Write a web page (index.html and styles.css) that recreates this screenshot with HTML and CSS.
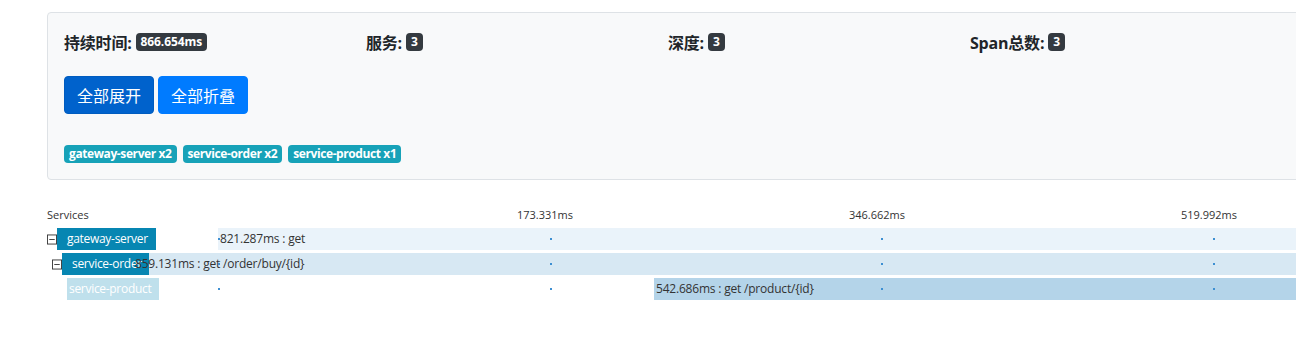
FILE: index.html
```html
<!DOCTYPE html>
<html lang="zh-CN">
<head>
    <meta charset="UTF-8">
    <meta name="viewport" content="width=device-width, initial-scale=1.0">
    <title>Trace</title>
    <link rel="stylesheet" href="styles.css">
</head>
<body>

    <div class="page">
        <div class="summary">
            <div class="stats">
                <div class="stat">持续时间: <span class="badge badge-dark">866.654ms</span></div>
                <div class="stat">服务: <span class="badge badge-dark">3</span></div>
                <div class="stat">深度: <span class="badge badge-dark">3</span></div>
                <div class="stat">Span总数: <span class="badge badge-dark">3</span></div>
            </div>

            <div class="actions">
                <button class="btn btn-primary active">全部展开</button>
                <button class="btn btn-primary">全部折叠</button>
            </div>

            <div class="tags">
                <span class="badge badge-info">gateway-server x2</span>
                <span class="badge badge-info">service-order x2</span>
                <span class="badge badge-info">service-product x1</span>
            </div>
        </div>

        <div class="trace">
            <div class="trace-head">
                <span class="trace-title">Services</span>
                <span class="tick-label" style="left: 498px">173.331ms</span>
                <span class="tick-label" style="left: 830px">346.662ms</span>
                <span class="tick-label" style="left: 1162px">519.992ms</span>
            </div>

            <!-- level 0 -->
            <div class="trace-row">
                <span class="toggle">
                    <svg width="11" height="11" viewBox="0 0 11 11"><rect x="0.5" y="0.5" width="10" height="10" fill="#fff" stroke="#333"/><line x1="2.5" y1="5.5" x2="8.5" y2="5.5" stroke="#333"/></svg>
                </span>
                <span class="trace-name">gateway-server</span>
                <div class="bar bar-1" style="left: 171px"><span class="bar-text">821.287ms : get</span></div>
                <i class="tick" style="left: 171px"></i>
                <i class="tick" style="left: 503px"></i>
                <i class="tick" style="left: 834px"></i>
                <i class="tick" style="left: 1166px"></i>
            </div>

            <!-- level 1 -->
            <div class="trace-row">
                <span class="indent"></span>
                <span class="toggle">
                    <svg width="11" height="11" viewBox="0 0 11 11"><rect x="0.5" y="0.5" width="10" height="10" fill="#fff" stroke="#333"/><line x1="2.5" y1="5.5" x2="8.5" y2="5.5" stroke="#333"/></svg>
                </span>
                <span class="trace-name trace-name-cut">service-order</span>
                <div class="bar bar-2" style="left: 86px"><span class="bar-text">859.131ms : get /order/buy/{id}</span></div>
                <i class="tick" style="left: 171px"></i>
                <i class="tick" style="left: 503px"></i>
                <i class="tick" style="left: 834px"></i>
                <i class="tick" style="left: 1166px"></i>
            </div>

            <!-- level 2 -->
            <div class="trace-row">
                <span class="indent indent-2"></span>
                <span class="trace-name trace-name-leaf">service-product</span>
                <div class="bar bar-3" style="left: 607px"><span class="bar-text">542.686ms : get /product/{id}</span></div>
                <i class="tick" style="left: 171px"></i>
                <i class="tick" style="left: 503px"></i>
                <i class="tick" style="left: 834px"></i>
                <i class="tick" style="left: 1166px"></i>
            </div>
        </div>
    </div>

</body>
</html>
```

FILE: styles.css
```css
/* General Styles */
body {
    margin: 0;
    font-family: 'Open Sans', 'Noto Sans CJK SC', sans-serif;
    color: #212529;
    background: #ffffff;
    overflow: hidden;
}

.page {
    padding: 12px 0 0 47px;
}

/* Summary Card */
.summary {
    width: 1300px;
    background: #f8f9fa;
    border: 1px solid #dee2e6;
    border-radius: 4px;
    padding: 16px;
}

.stats {
    display: grid;
    grid-template-columns: repeat(4, 302px);
    height: 26px;
    align-items: center;
}

.stat {
    font-size: 16px;
    font-weight: 700;
    letter-spacing: -0.2px;
    display: flex;
    align-items: center;
    gap: 4px;
}

.badge {
    display: inline-block;
    font-family: 'Open Sans', 'Noto Sans CJK SC', sans-serif;
    font-size: 12px;
    font-weight: 700;
    line-height: 1;
    letter-spacing: -0.4px;
    padding: 3px 5px;
    border-radius: 4px;
    color: #fff;
    white-space: nowrap;
}

.badge-dark {
    background: #343a40;
    letter-spacing: -0.1px;
}

.badge-info {
    background: #17a2b8;
}

/* Buttons */
.actions {
    display: flex;
    gap: 4px;
    margin-top: 21px;
}

.btn {
    font-family: 'Noto Sans CJK SC', sans-serif;
    font-size: 16px;
    line-height: 24px;
    padding: 6px 12px;
    border: 1px solid transparent;
    border-radius: 4px;
    color: #fff;
    cursor: pointer;
}

.btn-primary {
    background: #007bff;
    border-color: #007bff;
}

.btn-primary.active {
    background: #0062cc;
    border-color: #005cbf;
}

.tags {
    display: flex;
    gap: 6px;
    margin-top: 31px;
}

/* Trace Timeline */
.trace {
    margin-top: 27px;
    font-size: 12px;
    color: #333;
}

.trace-head {
    position: relative;
    height: 21px;
    line-height: 16px;
    font-size: 11px;
}

.tick-label {
    position: absolute;
    top: 0;
    transform: translateX(-50%);
}

.trace-row {
    position: relative;
    display: flex;
    align-items: center;
    height: 22px;
    margin-bottom: 3px;
    white-space: nowrap;
}

.indent {
    width: 5px;
    flex: none;
}

.indent-2 {
    width: 20px;
}

.toggle {
    display: flex;
    width: 10px;
    flex: none;
    position: relative;
    z-index: 1;
}

.trace-name {
    position: relative;
    z-index: 1;
    height: 22px;
    line-height: 22px;
    padding: 0 8px 0 10px;
    background: #0786b2;
    color: #fff;
    font-size: 12px;
    letter-spacing: -0.3px;
}

.trace-name-cut {
    width: 69px;
    overflow: hidden;
}

.trace-name-leaf {
    background: #bfe0ec;
    padding-left: 2px;
}

.bar {
    position: absolute;
    top: 0;
    right: -400px;
    height: 22px;
    line-height: 22px;
    padding-left: 2px;
}

.bar-1 {
    background: #eaf3fa;
}

.bar-2 {
    background: #d7e8f3;
}

.bar-3 {
    background: #b4d4e9;
}

.bar-text {
    position: relative;
    z-index: 2;
    letter-spacing: -0.2px;
}

.tick {
    position: absolute;
    top: 10px;
    width: 2px;
    height: 2px;
    background: #3d8fd2;
    z-index: 2;
}
```
